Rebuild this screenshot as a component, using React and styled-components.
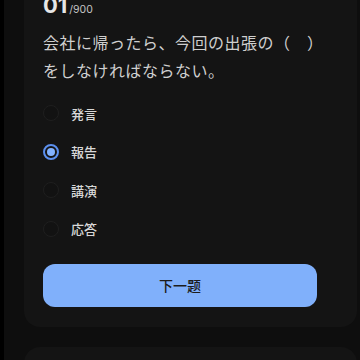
import React, { useState } from "react";
import styled, { createGlobalStyle } from "styled-components";

const GlobalStyle = createGlobalStyle`
  html, body {
    margin: 0;
    padding: 0;
    background: #0e0e0e;
    overflow: hidden;
  }
  body {
    font-family: "Noto Sans CJK JP", "Noto Sans", sans-serif;
  }
`;

const Shell = styled.div`
  height: 360px;
  border-left: 4px solid #000;
  padding: 0 3px 0 20px;
  overflow: hidden;
`;

const Card = styled.section`
  background: #141414;
  border-radius: ${(p) => (p.$cut ? "0 0 16px 16px" : "16px")};
  margin-top: ${(p) => (p.$cut ? "-28px" : "20px")};
  padding: ${(p) => (p.$cut ? "20px 40px 20px 19px" : "20px")};
  min-height: ${(p) => (p.$cut ? "auto" : "80px")};
`;

const Counter = styled.div`
  display: flex;
  align-items: baseline;
  gap: 2px;
  color: #e6e6e6;
  height: 26px;
  line-height: 26px;
`;

const Num = styled.span`
  font-family: "Inter", "Noto Sans", sans-serif;
  font-size: 22px;
  font-weight: 700;
`;

const Total = styled.span`
  font-family: "Inter", "Noto Sans", sans-serif;
  font-size: 10.5px;
  color: #c4c4c4;
`;

const Question = styled.p`
  margin: 10px 0 0;
  font-size: 16px;
  letter-spacing: 0.5px;
  line-height: 28px;
  color: #cfcfcf;
`;

const Options = styled.div`
  margin-top: 10px;
  display: flex;
  flex-direction: column;
`;

const Option = styled.label`
  display: flex;
  align-items: center;
  gap: 12px;
  height: 38.5px;
  cursor: pointer;
  font-size: 13px;
  font-weight: 500;
  color: #d8d8d8;
`;

const Radio = styled.span`
  width: 16px;
  height: 16px;
  box-sizing: border-box;
  border-radius: 50%;
  border: ${(p) => (p.$on ? "2px solid #5b8fee" : "1.5px solid #1f1f1f")};
  background: ${(p) => (p.$on ? "#141414" : "#121212")};
  display: flex;
  align-items: center;
  justify-content: center;
  &::after {
    content: "";
    width: 8px;
    height: 8px;
    border-radius: 50%;
    background: ${(p) => (p.$on ? "#82b2ff" : "transparent")};
  }
`;

const NextButton = styled.button`
  margin-top: 16px;
  width: 100%;
  height: 43px;
  border: none;
  border-radius: 12px;
  background: #80b0fb;
  color: #1c1c1c;
  font-family: inherit;
  font-size: 14px;
  font-weight: 500;
  line-height: 1;
  padding-bottom: 3px;
  cursor: pointer;
`;

const choices = ["発言", "報告", "講演", "応答"];

export default function App() {
  const [picked, setPicked] = useState(1);
  return (
    <>
      <GlobalStyle />
      <Shell>
        <Card $cut>
          <Counter>
            <Num>01</Num>
            <Total>/900</Total>
          </Counter>
          <Question>
            会社に帰ったら、今回の出張の（　）をしなければならない。
          </Question>
          <Options>
            {choices.map((c, i) => (
              <Option key={c} onClick={() => setPicked(i)}>
                <Radio $on={picked === i} />
                {c}
              </Option>
            ))}
          </Options>
          <NextButton>下一题</NextButton>
        </Card>
        <Card />
      </Shell>
    </>
  );
}
